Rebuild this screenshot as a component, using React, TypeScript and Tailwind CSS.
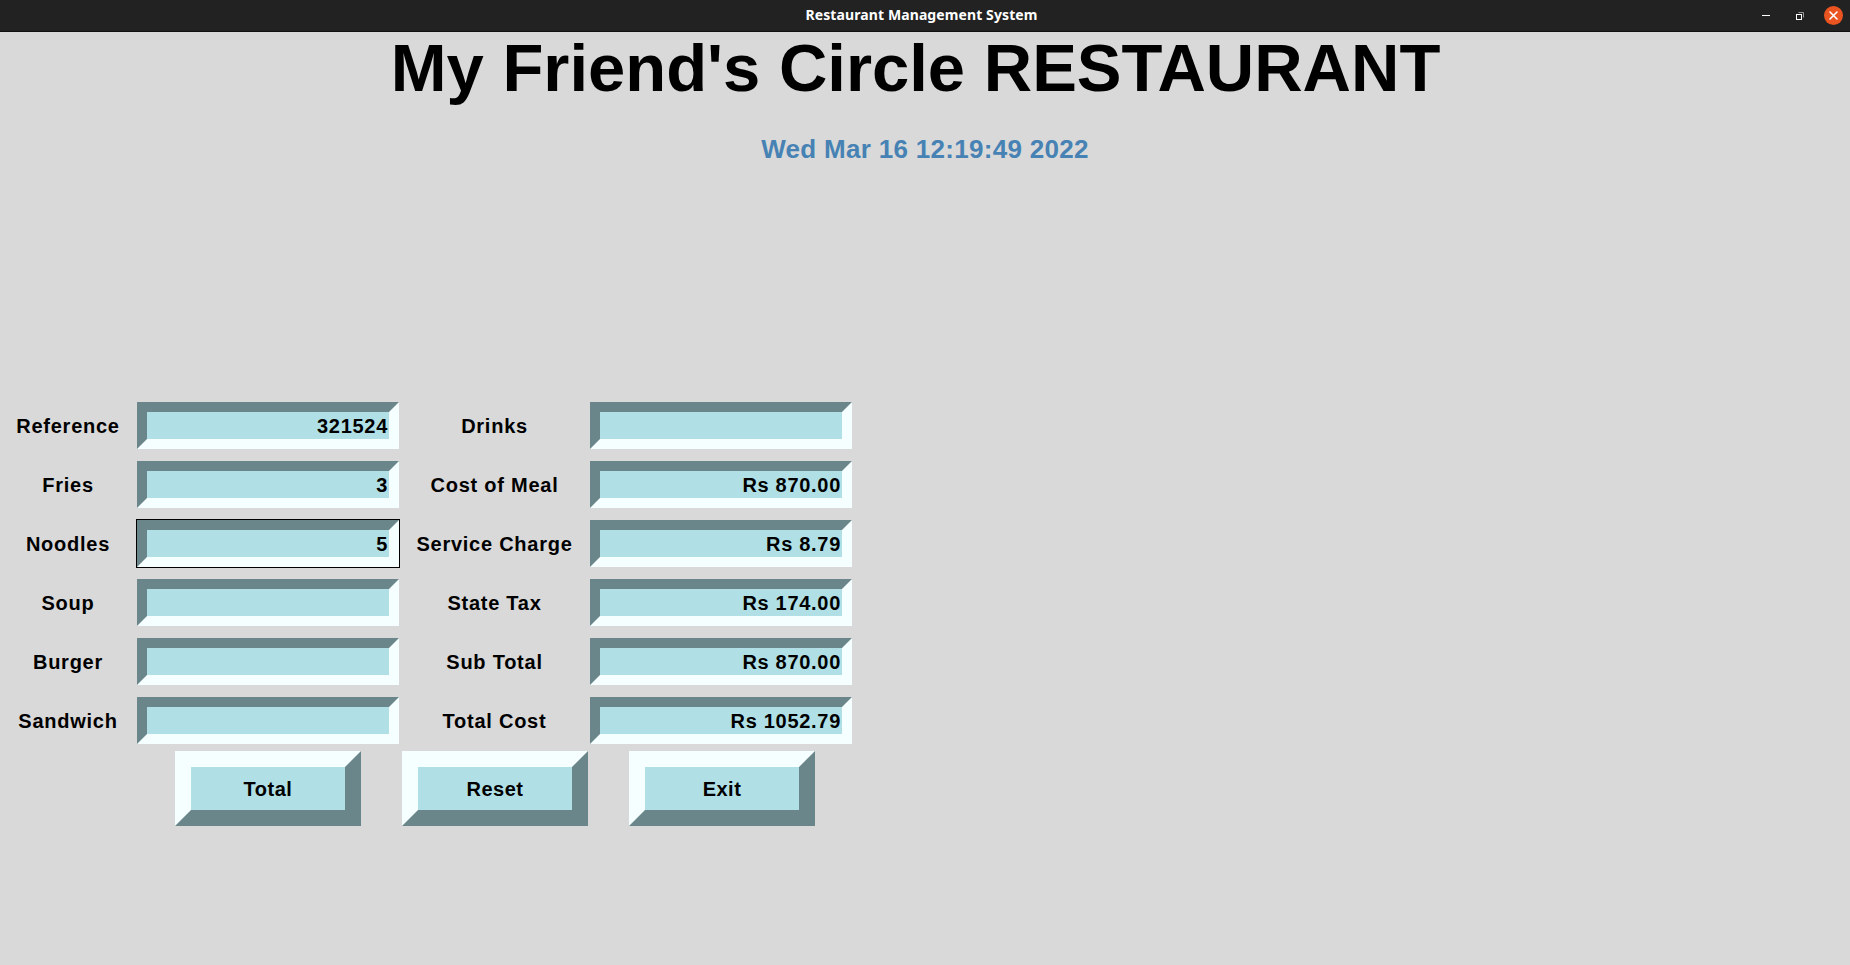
const leftRows = [
  { label: "Reference", value: "321524" },
  { label: "Fries", value: "3" },
  { label: "Noodles", value: "5", focused: true },
  { label: "Soup", value: "" },
  { label: "Burger", value: "" },
  { label: "Sandwich", value: "" },
];

const rightRows = [
  { label: "Drinks", value: "" },
  { label: "Cost of Meal", value: "Rs 870.00" },
  { label: "Service Charge", value: "Rs 8.79" },
  { label: "State Tax", value: "Rs 174.00" },
  { label: "Sub Total", value: "Rs 870.00" },
  { label: "Total Cost", value: "Rs 1052.79" },
];

const Entry = ({ value, focused }: { value: string; focused?: boolean }) => {
  return (
    <div
      className={`w-[264px] h-[49px] border ${
        focused ? "border-black" : "border-transparent"
      }`}
    >
      <div className="w-full h-full border-[10px] border-t-[#6a868a] border-l-[#6a868a] border-b-[#f6ffff] border-r-[#f6ffff] bg-[#b0e0e6] flex items-center justify-end pr-[1px]">
        <span className="text-[20px] font-bold tracking-[0.7px] leading-none text-black">
          {value}
        </span>
      </div>
    </div>
  );
};

const BevelButton = ({ text }: { text: string }) => {
  return (
    <div className="w-[186px] h-[75px] border-[16px] border-t-[#f6ffff] border-l-[#f6ffff] border-b-[#6a868a] border-r-[#6a868a] bg-[#b0e0e6] flex items-center justify-center">
      <span className="text-[20px] font-bold tracking-[0.5px] leading-none text-black">
        {text}
      </span>
    </div>
  );
};

const TitleBar = () => {
  return (
    <div className="h-[32px] bg-[#222222] border-b border-[#111111] flex items-center">
      <div className="flex-1" />
      <div className="text-white text-[14px] font-bold tracking-[0.1px] font-['Noto_Sans',sans-serif] leading-none -mt-[2px]">
        Restaurant Management System
      </div>
      <div className="flex-1 flex items-center justify-end pr-[7px]">
        <div className="w-[8px] h-px bg-white" />
        <svg width="10" height="10" viewBox="0 0 10 10" className="ml-[25px]">
          <rect x="1.5" y="3.5" width="5" height="5" fill="none" stroke="white" strokeWidth="1" />
          <path d="M3.5 1.5 H8.5 V6.5" fill="none" stroke="#9a9a9a" strokeWidth="1" />
        </svg>
        <svg width="19" height="19" viewBox="0 0 19 19" className="ml-[19px]">
          <circle cx="9.5" cy="9.5" r="9.5" fill="#e95420" />
          <path d="M6 6 L13 13 M13 6 L6 13" stroke="white" strokeWidth="1.6" strokeLinecap="round" />
        </svg>
      </div>
    </div>
  );
};

const App = () => {
  return (
    <div className="w-full h-[965px] overflow-hidden bg-[#d9d9d9] font-['Liberation_Sans',Arial,sans-serif]">
      <TitleBar />
      <div className="mt-[2px] pr-[19px] text-center text-[67px] font-bold leading-none text-black">
        My Friend's Circle RESTAURANT
      </div>
      <div className="mt-[35px] text-center text-[26px] font-bold leading-none tracking-[0.3px] text-[#4682b4]">
        Wed Mar 16 12:19:49 2022
      </div>
      <div className="mt-[239px] flex flex-col gap-[10px]">
        {leftRows.map((row, i) => (
          <div key={row.label} className="flex items-center h-[49px]">
            <div className="w-[136px] text-center text-[20px] font-bold tracking-[0.75px] leading-none text-black">
              {row.label}
            </div>
            <Entry value={row.value} focused={row.focused} />
            <div className="w-[189px] text-center text-[20px] font-bold tracking-[0.75px] leading-none text-black">
              {rightRows[i].label}
            </div>
            <Entry value={rightRows[i].value} />
          </div>
        ))}
      </div>
      <div className="mt-[6px] flex pl-[175px] gap-[41px]">
        <BevelButton text="Total" />
        <BevelButton text="Reset" />
        <BevelButton text="Exit" />
      </div>
    </div>
  );
};

export default App;
